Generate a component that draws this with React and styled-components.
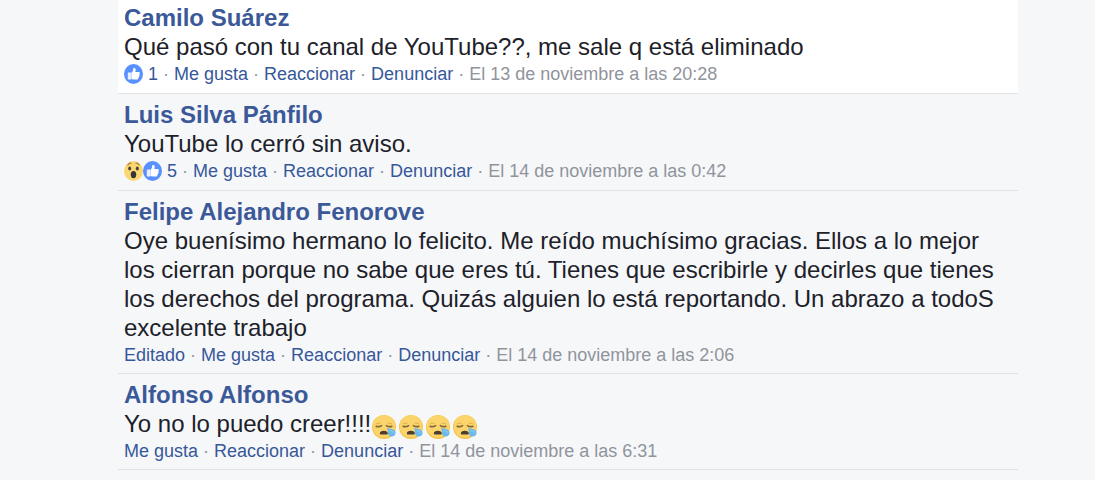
import React from 'react';
import styled, { createGlobalStyle } from 'styled-components';

const comments = [
    {
        id: 1,
        author: 'Camilo Suárez',
        text: 'Qué pasó con tu canal de YouTube??, me sale q está eliminado',
        reactions: ['like'],
        count: 1,
        date: 'El 13 de noviembre a las 20:28',
        highlighted: true,
    },
    {
        id: 2,
        author: 'Luis Silva Pánfilo',
        text: 'YouTube lo cerró sin aviso.',
        reactions: ['wow', 'like'],
        count: 5,
        date: 'El 14 de noviembre a las 0:42',
    },
    {
        id: 3,
        author: 'Felipe Alejandro Fenorove',
        text: 'Oye buenísimo hermano lo felicito. Me reído muchísimo gracias. Ellos a lo mejor los cierran porque no sabe que eres tú. Tienes que escribirle y decirles que tienes los derechos del programa. Quizás alguien lo está reportando. Un abrazo a todoS excelente trabajo',
        edited: true,
        date: 'El 14 de noviembre a las 2:06',
    },
    {
        id: 4,
        author: 'Alfonso Alfonso',
        text: 'Yo no lo puedo creer!!!!',
        sleepy: 4,
        date: 'El 14 de noviembre a las 6:31',
    },
];

const GlobalStyle = createGlobalStyle`
    body {
        margin: 0;
        background: #f6f7f9;
        font-family: "Liberation Sans", Arial, sans-serif;
        color: #1d2129;
    }
`

const Thread = styled.main`
    padding: 0 77px 0 118px;
`

const Comment = styled.article`
    padding: ${(props) => (props.$highlighted ? '3px' : '6px')} 6px 6px;
    background: ${(props) => (props.$highlighted ? '#fff' : 'transparent')};
    border-bottom: 1px solid #e1e2e5;
`

const Author = styled.a`
    display: block;
    width: fit-content;
    font-size: 24px;
    font-weight: bold;
    line-height: 29px;
    color: #3b5998;
    text-decoration: none;
`

const Text = styled.p`
    margin: 0 0 1px;
    font-size: 24px;
    line-height: 29px;
`

const Meta = styled.div`
    display: flex;
    align-items: flex-start;
    height: ${(props) => (props.$reactions ? '25px' : '24px')};
    font-size: 18px;
    line-height: 24px;
    color: #90949c;
    white-space: pre;
`

const Action = styled.button`
    padding: 0;
    border: 0;
    background: transparent;
    font: inherit;
    color: #365899;
    cursor: pointer;
`

const Reactions = styled(Action)`
    display: flex;
    align-items: center;
`

const Count = styled.span`
    margin-left: 5px;
`

const ReactionIcon = styled.svg`
    display: block;
    width: 19px;
    height: 20px;
`

// negative bottom margin keeps the icon from stretching the line
const SleepyIcon = styled.svg`
    width: 24px;
    height: 24px;
    margin: 0 2px -2px 1px;
    vertical-align: -5px;
`

function Like() {
    return (
        <ReactionIcon viewBox="0 0 20 20" preserveAspectRatio="none" aria-hidden="true">
            <circle cx="10" cy="10" r="10" fill="#5890ff" />
            <rect x="4" y="8.6" width="3.6" height="7" rx=".5" fill="#e6eeff" />
            <path d="M7.8 8.8c1.5-1 1.7-2.2 1.8-3.8.1-1.4 2.5-1.2 2.7.5.1 1-.1 1.8-.4 2.6h3.4c1.5 0 1.8 1.5.8 2.1.6.7.4 1.7-.4 2 .3.8-.1 1.5-.7 1.7.1.9-.5 1.7-1.5 1.7H10c-.8 0-1.6-.2-2.2-.5z" fill="#fff" />
        </ReactionIcon>
    );
}

function Wow() {
    return (
        <ReactionIcon viewBox="0 0 20 20" preserveAspectRatio="none" aria-hidden="true">
            <circle cx="10" cy="10" r="10" fill="#fbd671" />
            <path d="M4 4Q5.3 1.8 7.4 2.1M12.6 2.1Q14.8 1.8 16 4" fill="none" stroke="#a78441" strokeWidth="1.2" strokeLinecap="round" />
            <ellipse cx="6" cy="7.4" rx="1.6" ry="2" fill="#4a4238" />
            <ellipse cx="14" cy="7.4" rx="1.6" ry="2" fill="#4a4238" />
            <ellipse cx="10" cy="13.6" rx="2.9" ry="3.6" fill="#343538" />
        </ReactionIcon>
    );
}

function Sleepy() {
    return (
        <SleepyIcon viewBox="0 0 24 24" role="img" aria-label="😪">
            <circle cx="12" cy="12" r="12" fill="#f4c24a" />
            <circle cx="12" cy="11.4" r="11.2" fill="#fbd56b" />
            <path d="M3.8 9Q6 7.6 8.4 8.4M15.6 8.4Q18 7.6 20.2 9" fill="none" stroke="#e0b04c" strokeWidth="1" />
            <path d="M4.2 11.4Q7.4 12.2 9.6 10.6M14.4 10.6Q16.6 12.2 19.8 11.4" fill="none" stroke="#80683a" strokeWidth="1.6" strokeLinecap="round" />
            <path d="M7.8 18.4C7.8 16.6 9.4 15.8 11.8 15.8s4 .8 4 2.6c0 .8-.5 1.1-1.2 1.1H9c-.7 0-1.2-.3-1.2-1.1z" fill="#4d3d2c" />
            <path d="M14.8 13.2c3.6 0 8.8 1 8.8 4.6 0 2.3-1.7 3.8-3.9 3.8-2.5 0-3.7-1.7-3.7-3.7 0-1.8-.2-3-1.2-4.7z" fill="#6bb9ea" />
            <path d="M18 15.6q2.8.2 3.6 2" fill="none" stroke="#8ccbf2" strokeWidth="1.2" strokeLinecap="round" />
        </SleepyIcon>
    );
}

function CommentItem({ comment }) {
    const { author, text, reactions, count, edited, sleepy = 0, date, highlighted } = comment;

    return (
        <Comment $highlighted={highlighted}>
            <Author href="#">{author}</Author>
            <Text>
                {text}
                {Array.from({ length: sleepy }, (_, i) => <Sleepy key={i} />)}
            </Text>
            <Meta $reactions={Boolean(reactions)}>
                {reactions && (
                    <>
                        <Reactions type="button">
                            {reactions.map((e) => (e === 'like' ? <Like key={e} /> : <Wow key={e} />))}
                            <Count>{count}</Count>
                        </Reactions>
                        <span> · </span>
                    </>
                )}
                {edited && (
                    <>
                        <Action type="button">Editado</Action>
                        <span> · </span>
                    </>
                )}
                <Action type="button">Me gusta</Action>
                <span> · </span>
                <Action type="button">Reaccionar</Action>
                <span> · </span>
                <Action type="button">Denunciar</Action>
                <span> · </span>
                <span>{date}</span>
            </Meta>
        </Comment>
    );
}

function App() {
    return (
        <>
            <GlobalStyle />
            <Thread>
                {comments.map((e) => <CommentItem comment={e} key={e.id} />)}
            </Thread>
        </>
    );
}

export default App;
